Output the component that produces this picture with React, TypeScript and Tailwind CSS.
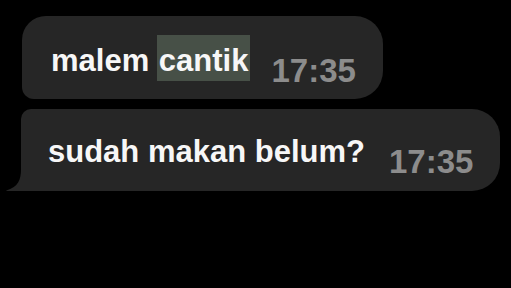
import React from "react";

export default function App() {
  return (
    <div
      className="w-[511px] h-[288px] bg-black flex flex-col items-start pt-[16px] pl-[21px] gap-[10px] overflow-hidden"
      style={{ fontFamily: '"Liberation Sans", Arial, sans-serif' }}
    >
      {/* Bubble 1 */}
      <div className="ml-px flex items-start h-[83px] pl-[29px] pr-[27px] bg-[#262626] rounded-tl-[24px] rounded-bl-[12px] rounded-r-[28px]">
        <span className="mt-[27px] text-[31px] leading-[36px] font-bold text-[#f7f7f7] whitespace-nowrap">
          malem{" "}
          <span className="bg-[#475047] pt-[8px] pb-[3px] px-[2px] -mx-px">cantik</span>
        </span>
        <span className="ml-[22px] mt-[37px] text-[33px] leading-[36px] font-bold text-[#8c8c8c] whitespace-nowrap">
          17:35
        </span>
      </div>

      {/* Bubble 2 */}
      <div className="relative flex items-start h-[82px] pl-[27px] pr-[27px] bg-[#262626] rounded-tl-[10px] rounded-bl-none rounded-r-[28px]">
        <svg
          className="absolute left-[-15px] bottom-0"
          width="16"
          height="22"
          viewBox="0 0 16 22"
        >
          <path d="M16 0 L15 0 C15 11 12 18 1 21.2 C0 21.5 0 22 1 22 L16 22 Z" fill="#262626" />
        </svg>
        <span className="mt-[25px] text-[31px] leading-[36px] font-bold text-[#f7f7f7] whitespace-nowrap">
          sudah makan belum?
        </span>
        <span className="ml-[24px] mt-[35px] text-[33px] leading-[36px] font-bold text-[#8c8c8c] whitespace-nowrap">
          17:35
        </span>
      </div>
    </div>
  );
}
